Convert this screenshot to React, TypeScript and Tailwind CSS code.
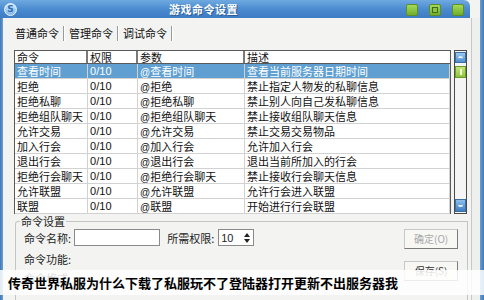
import React from "react";

const rows = [
  ["查看时间", "0/10", "@查看时间", "查看当前服务器日期时间"],
  ["拒绝", "0/10", "@拒绝", "禁止指定人物发的私聊信息"],
  ["拒绝私聊", "0/10", "@拒绝私聊", "禁止别人向自己发私聊信息"],
  ["拒绝组队聊天", "0/10", "@拒绝组队聊天", "禁止接收组队聊天信息"],
  ["允许交易", "0/10", "@允许交易", "禁止交易交易物品"],
  ["加入行会", "0/10", "@加入行会", "允许加入行会"],
  ["退出行会", "0/10", "@退出行会", "退出当前所加入的行会"],
  ["拒绝行会聊天", "0/10", "@拒绝行会聊天", "禁止接收行会聊天信息"],
  ["允许联盟", "0/10", "@允许联盟", "允许行会进入联盟"],
  ["联盟", "0/10", "@联盟", "开始进行行会联盟"],
];

const cjk = { fontFamily: '"Noto Sans CJK SC", "Noto Sans", sans-serif' };
const lat = { fontFamily: '"Liberation Sans", Arial, sans-serif' };

function Row({ r, sel }: { r: string[]; sel: boolean }) {
  const base = sel ? "bg-[#5f9fd2] text-white" : "bg-white text-[#111]";
  const cell = "h-[15px] leading-[14px] border-r border-b border-[#d2d2d2] overflow-hidden whitespace-nowrap";
  return (
    <div className={`flex h-[15px] ${base} text-[11px]`}>
      <div className={`w-[73px] pl-[2px] ${cell}`}>{r[0]}</div>
      <div className={`w-[50px] pl-[2px] ${cell}`} style={lat}>{r[1]}</div>
      <div className={`w-[107px] pl-[2px] ${cell}`}>
        <span className="text-[10px]" style={lat}>@</span>{r[2].slice(1)}
      </div>
      <div className={`flex-1 pl-[2px] ${cell}`}>{r[3]}</div>
    </div>
  );
}

function GreenBtn({ inner }: { inner?: boolean }) {
  return (
    <div className="w-[12px] h-[12px] rounded-[2px] bg-gradient-to-b from-[#a6d95a] to-[#6fae2c] border border-[#5d8f24] flex items-center justify-center">
      {inner && <div className="w-[6px] h-[6px] border border-[#3f6a16] bg-[#8cc44a]" />}
    </div>
  );
}

export default function App() {
  return (
    <div className="relative w-[484px] h-[300px] overflow-hidden bg-[#f3f4f1] flex" style={cjk}>
      {/* left frame */}
      <div className="w-[4px] bg-gradient-to-r from-[#3f78b8] to-[#6b9fd4]" />
      <div className="flex-1 flex flex-col">
        {/* title bar */}
        <div className="h-[18px] flex items-center bg-gradient-to-b from-[#6fa9e0] via-[#4b8bd0] to-[#3d7bc2] rounded-tr-[6px] mr-[10px] -ml-[4px] pl-[5px]">
          <div className="w-[13px] h-[13px] rounded-full bg-gradient-to-b from-[#cfe8fb] to-[#7fb8e8] border border-[#e8f4ff] flex items-center justify-center text-[9px] font-bold text-[#2f6fb3] leading-none" style={{ fontFamily: '"DejaVu Sans", sans-serif' }}>S</div>
          <div className="ml-[152px] text-white font-bold text-[11px] leading-[14px] tracking-[0.5px]" style={{ textShadow: "1px 1px 0 #2a5f99" }}>游戏命令设置</div>
          <div className="ml-auto flex items-center gap-[11px] mr-[6px] mt-[2px]">
            <GreenBtn />
            <GreenBtn inner />
            <GreenBtn />
          </div>
        </div>
        <div className="flex-1 flex">
          <div className="flex-1 flex flex-col pl-[11px] pr-[4px]">
            {/* tabs */}
            <div className="flex items-center h-[18px] mt-[6px] text-[11px] leading-[14px] text-[#111]">
              <span className="ml-[1px]">普通命令</span>
              <div className="w-[2px] h-[15px] border-l border-[#9a9a9a] border-r border-r-white mx-[4px]" />
              <span>管理命令</span>
              <div className="w-[2px] h-[15px] border-l border-[#9a9a9a] border-r border-r-white mx-[4px]" />
              <span>调试命令</span>
              <div className="w-[2px] h-[15px] border-l border-[#9a9a9a] border-r border-r-white mx-[4px]" />
            </div>
            {/* table + scrollbar */}
            <div className="flex mt-[8px]">
              <div className="w-[437px] border border-[#5a5a5a] border-b-0 bg-white">
                <div className="flex h-[13px] text-[11px] leading-[13px] text-[#111] border-b border-[#5a5a5a]">
                  <div className="w-[73px] pl-[2px] border-r-2 border-[#7a7a7a] whitespace-nowrap">命令</div>
                  <div className="w-[50px] pl-[2px] border-r-2 border-[#7a7a7a] whitespace-nowrap">权限</div>
                  <div className="w-[107px] pl-[2px] border-r-2 border-[#7a7a7a] whitespace-nowrap">参数</div>
                  <div className="flex-1 pl-[2px] whitespace-nowrap">描述</div>
                </div>
                {rows.map((r, i) => (
                  <Row key={i} r={r} sel={i === 0} />
                ))}
              </div>
              <div className="ml-[3px] w-[13px] h-[164px] border border-[#4a4a4a] bg-[#f5f5f5] flex flex-col items-center py-[1px]">
                <div className="w-[11px] h-[11px] bg-gradient-to-b from-[#9cc9ef] to-[#4d8fcf] border border-[#3c6fa3] flex items-center justify-center">
                  <div className="w-[5px] h-[3px] border-t-2 border-[#e8f3ff] rounded-t-full" />
                </div>
                <div className="mt-[3px] w-[11px] h-[12px] bg-gradient-to-b from-[#c4e67a] to-[#8ec43c] border border-[#6c9a28] flex items-center justify-center">
                  <div className="w-[2px] h-[6px] bg-[#f0ffd8]" />
                </div>
                <div className="flex-1" />
                <div className="w-[11px] h-[13px] bg-gradient-to-b from-[#8cbfec] to-[#3f7fc3] border border-[#3c6fa3] flex items-center justify-center">
                  <div className="w-[5px] h-[3px] border-b-2 border-[#e8f3ff] rounded-b-full" />
                </div>
              </div>
            </div>
            {/* group box */}
            <div className="relative mt-[7px] ml-[1px] mr-[-1px] flex-1 border border-[#c4c4c4] border-b-0 rounded-tl-[3px]">
              <div className="absolute -top-[7px] left-[4px] px-[1px] bg-[#f3f4f1] text-[11px] leading-[13px] text-[#222]">命令设置</div>
              <div className="flex items-center h-[17px] mt-[7px] ml-[8px] text-[11px] leading-[14px] text-[#222]">
                <span>命令名称:</span>
                <div className="ml-[3px] w-[86px] h-[17px] border border-[#8a8a8a] bg-white" />
                <span className="ml-[7px]">所需权限:</span>
                <div className="ml-[4px] w-[36px] h-[17px] border border-[#8a8a8a] bg-white flex items-center">
                  <span className="ml-[2px] text-[11px]" style={lat}>10</span>
                  <div className="ml-auto mr-[1px] w-[10px] h-[13px] flex flex-col items-center justify-center gap-[2px]">
                    <div className="w-0 h-0 border-l-[3px] border-r-[3px] border-b-[4px] border-l-transparent border-r-transparent border-b-[#222]" />
                    <div className="w-0 h-0 border-l-[3px] border-r-[3px] border-t-[4px] border-l-transparent border-r-transparent border-t-[#222]" />
                  </div>
                </div>
                <div className="ml-auto mr-[9px] w-[54px] h-[20px] mt-[2px] border border-[#c8c8c8] border-r-[#7a7a7a] border-b-[#7a7a7a] bg-[#f7f7f4] flex items-center justify-center text-[10px] text-[#a8a8a8]">
                  确定(O)
                </div>
              </div>
              <div className="flex h-[34px] mt-[3px] ml-[8px] text-[11px] leading-[14px] text-[#222]">
                <div className="flex flex-col pt-[3px] gap-[5px]">
                  <span>命令功能:</span>
                  <span>命令格式:</span>
                </div>
                <div className="ml-auto mr-[9px] mt-[12px] w-[54px] h-[20px] border border-[#c8c8c8] border-r-[#7a7a7a] border-b-[#7a7a7a] bg-[#f7f7f4] flex items-center justify-center text-[10px] text-[#333]">
                  保存(S)
                </div>
              </div>
            </div>
          </div>
          <div className="w-[9px] border-l border-[#c8c8c8] bg-[#eef0ee]" />
        </div>
      </div>
      {/* right frame */}
      <div className="w-[5px] bg-gradient-to-r from-[#6b9fd4] to-[#3f78b8]" />
      {/* caption overlay */}
      <div className="absolute left-0 right-0 top-[270px] h-[25px] bg-white/85 flex items-center pl-[8px]">
        <span className="text-[13px] font-bold text-black leading-none">传奇世界私服为什么下载了私服玩不了登陆器打开更新不出服务器我</span>
      </div>
    </div>
  );
}
